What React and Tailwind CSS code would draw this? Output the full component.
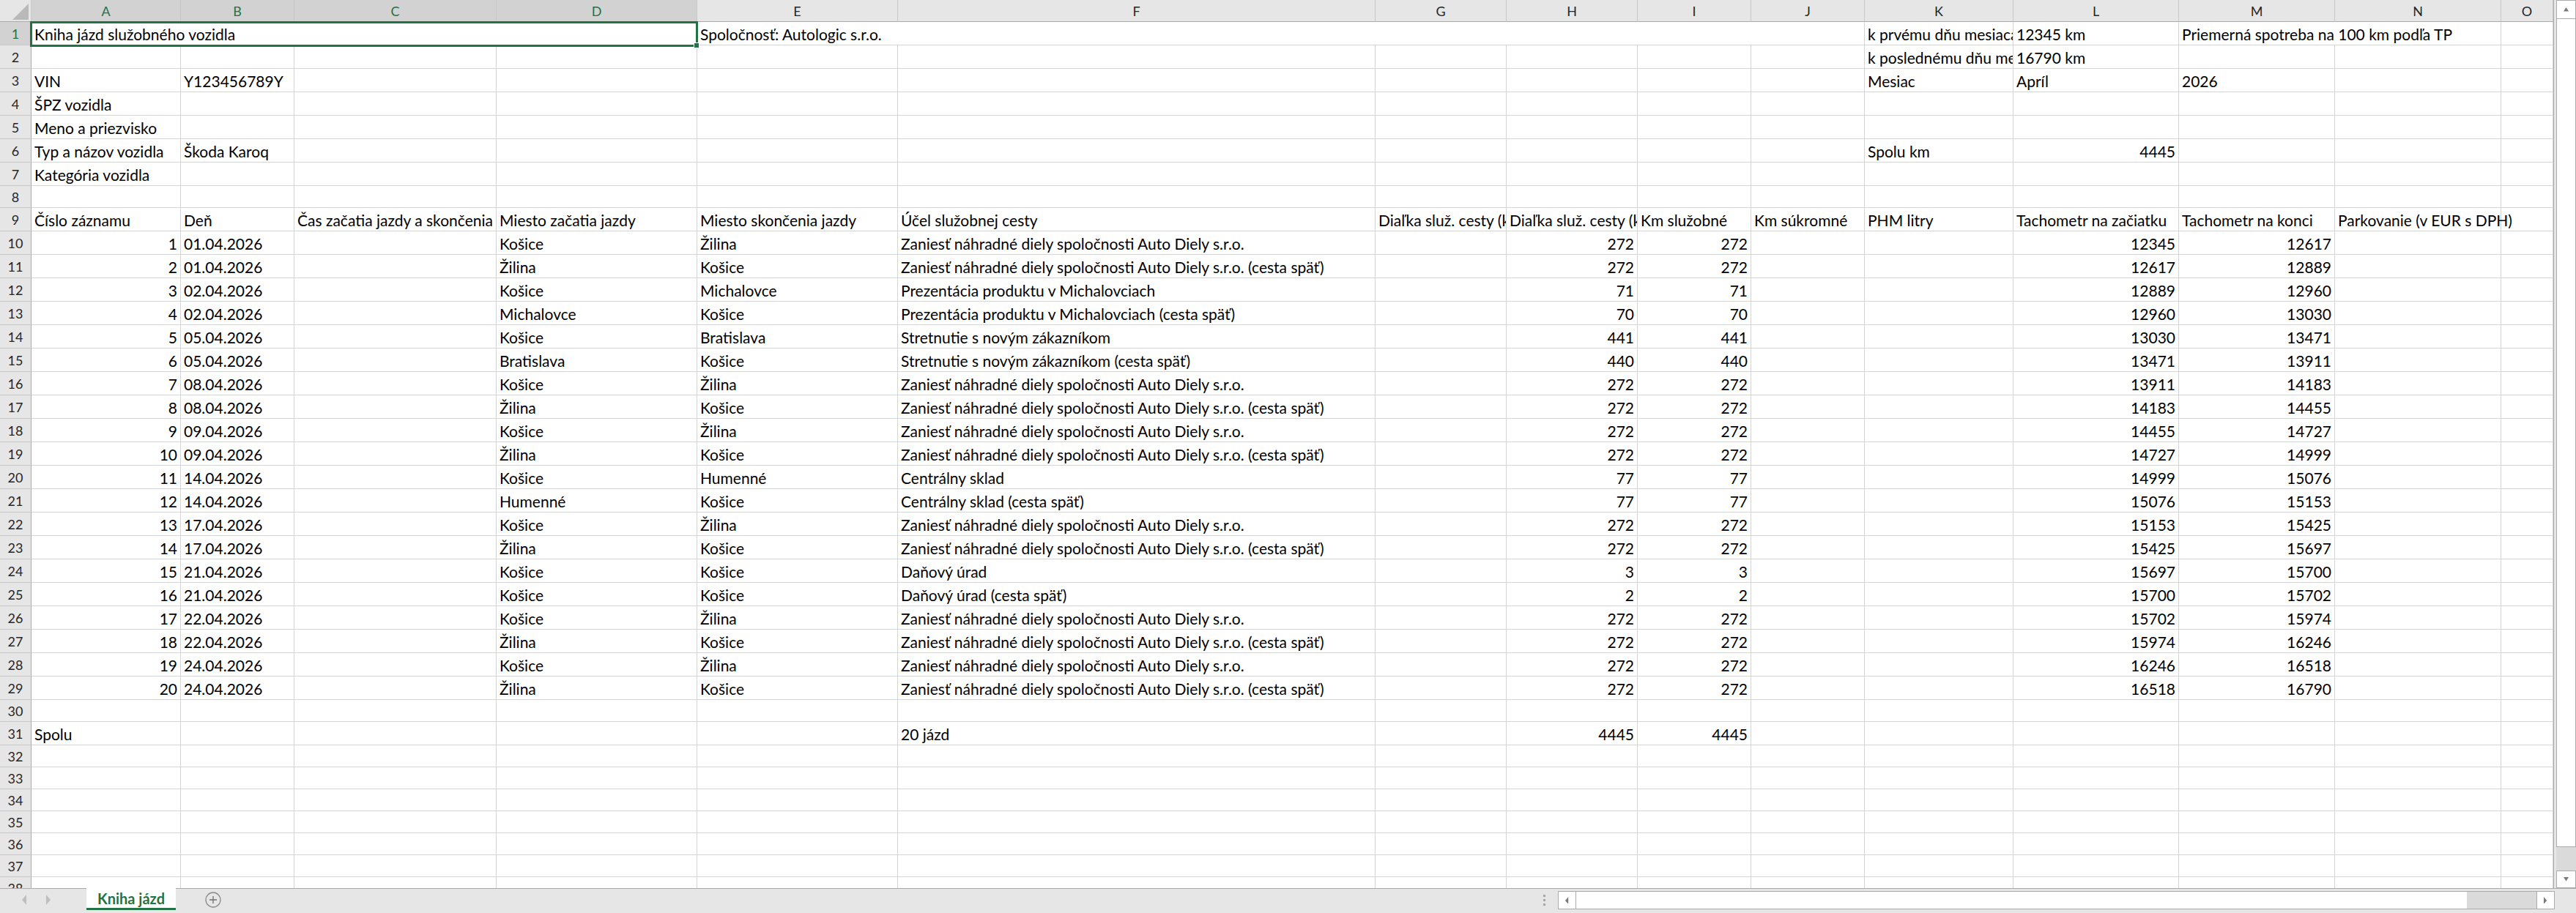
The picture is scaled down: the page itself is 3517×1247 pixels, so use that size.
// Kniha jázd – worksheet view

const COLS = [
  { key: 'A', w: 'w-[204px]' },
  { key: 'B', w: 'w-[155px]' },
  { key: 'C', w: 'w-[276px]' },
  { key: 'D', w: 'w-[274px]' },
  { key: 'E', w: 'w-[274px]' },
  { key: 'F', w: 'w-[652px]' },
  { key: 'G', w: 'w-[179px]' },
  { key: 'H', w: 'w-[179px]' },
  { key: 'I', w: 'w-[155px]' },
  { key: 'J', w: 'w-[155px]' },
  { key: 'K', w: 'w-[203px]' },
  { key: 'L', w: 'w-[226px]' },
  { key: 'M', w: 'w-[213px]' },
  { key: 'N', w: 'w-[227px]' },
  { key: 'O', w: 'w-[71px]' },
]

const SELECTED_COLS = ['A', 'B', 'C', 'D']

const DELIVERY = 'Zaniesť náhradné diely spoločnosti Auto Diely s.r.o.'
const BACK = ' (cesta späť)'

const trips = [
  ['01.04.2026', 'Košice', 'Žilina', DELIVERY, 272, 12345, 12617],
  ['01.04.2026', 'Žilina', 'Košice', DELIVERY + BACK, 272, 12617, 12889],
  ['02.04.2026', 'Košice', 'Michalovce', 'Prezentácia produktu v Michalovciach', 71, 12889, 12960],
  ['02.04.2026', 'Michalovce', 'Košice', 'Prezentácia produktu v Michalovciach' + BACK, 70, 12960, 13030],
  ['05.04.2026', 'Košice', 'Bratislava', 'Stretnutie s novým zákazníkom', 441, 13030, 13471],
  ['05.04.2026', 'Bratislava', 'Košice', 'Stretnutie s novým zákazníkom' + BACK, 440, 13471, 13911],
  ['08.04.2026', 'Košice', 'Žilina', DELIVERY, 272, 13911, 14183],
  ['08.04.2026', 'Žilina', 'Košice', DELIVERY + BACK, 272, 14183, 14455],
  ['09.04.2026', 'Košice', 'Žilina', DELIVERY, 272, 14455, 14727],
  ['09.04.2026', 'Žilina', 'Košice', DELIVERY + BACK, 272, 14727, 14999],
  ['14.04.2026', 'Košice', 'Humenné', 'Centrálny sklad', 77, 14999, 15076],
  ['14.04.2026', 'Humenné', 'Košice', 'Centrálny sklad' + BACK, 77, 15076, 15153],
  ['17.04.2026', 'Košice', 'Žilina', DELIVERY, 272, 15153, 15425],
  ['17.04.2026', 'Žilina', 'Košice', DELIVERY + BACK, 272, 15425, 15697],
  ['21.04.2026', 'Košice', 'Košice', 'Daňový úrad', 3, 15697, 15700],
  ['21.04.2026', 'Košice', 'Košice', 'Daňový úrad' + BACK, 2, 15700, 15702],
  ['22.04.2026', 'Košice', 'Žilina', DELIVERY, 272, 15702, 15974],
  ['22.04.2026', 'Žilina', 'Košice', DELIVERY + BACK, 272, 15974, 16246],
  ['24.04.2026', 'Košice', 'Žilina', DELIVERY, 272, 16246, 16518],
  ['24.04.2026', 'Žilina', 'Košice', DELIVERY + BACK, 272, 16518, 16790],
]

const data = {
  2: { K: 'k poslednému dňu mesiaca', L: '16790 km' },
  3: { A: 'VIN', B: 'Y123456789Y', K: 'Mesiac', L: 'Apríl', M: '2026' },
  4: { A: 'ŠPZ vozidla' },
  5: { A: 'Meno a priezvisko' },
  6: { A: 'Typ a názov vozidla', B: 'Škoda Karoq', K: 'Spolu km', L: 4445 },
  7: { A: 'Kategória vozidla' },
  9: {
    A: 'Číslo záznamu',
    B: 'Deň',
    C: 'Čas začatia jazdy a skončenia jazdy',
    D: 'Miesto začatia jazdy',
    E: 'Miesto skončenia jazdy',
    F: 'Účel služobnej cesty',
    G: 'Diaľka služ. cesty (km)',
    H: 'Diaľka služ. cesty (km)',
    I: 'Km služobné',
    J: 'Km súkromné',
    K: 'PHM litry',
    L: 'Tachometr na začiatku',
    M: 'Tachometr na konci',
    N: 'Parkovanie (v EUR s DPH)',
  },
  31: { A: 'Spolu', F: '20 jázd', H: 4445, I: 4445 },
}

trips.forEach(([day, from, to, purpose, km, start, end], i) => {
  data[10 + i] = { A: i + 1, B: day, D: from, E: to, F: purpose, H: km, I: km, L: start, M: end }
})

// row 1 holds merged ranges A:D, E:J and M:N
const firstRow = [
  { w: 'w-[909px]', t: 'Kniha jázd služobného vozidla' },
  { w: 'w-[1594px]', t: 'Spoločnosť: Autologic s.r.o.' },
  { w: 'w-[203px]', t: 'k prvému dňu mesiaca' },
  { w: 'w-[226px]', t: '12345 km' },
  { w: 'w-[440px]', t: 'Priemerná spotreba na 100 km podľa TP' },
  { w: 'w-[71px]', t: '' },
]

const rowHeight = (n) => (n === 8 || n === 30 || n >= 32 ? 'h-[30px]' : 'h-[32px]')

// text runs on into the next cell when that one is empty, otherwise it is clipped
const cellsFor = (n) => {
  if (n === 1) return firstRow
  const row = data[n] || {}
  return COLS.map(({ key, w }, i) => {
    const v = row[key]
    const next = COLS[i + 1] && row[COLS[i + 1].key]
    const spill = typeof v === 'string' && next == null && COLS[i + 1] != null
    return { w, t: v ?? '', right: typeof v === 'number', spill }
  })
}

const Cell = ({ w, t, right, spill }) => (
  <div
    className={`${w} shrink-0 border-r border-b border-[#d4d4d4] flex items-center pt-[2px] whitespace-nowrap ${
      spill ? 'overflow-visible relative z-10' : 'overflow-hidden'
    } ${right ? 'justify-end pr-[4px]' : 'pl-[4px]'}`}
  >
    {t}
  </div>
)

const SheetRow = ({ n }) => {
  const active = n === 1
  return (
    <div className={`flex ${rowHeight(n)}`}>
      <div
        className={`w-[43px] shrink-0 flex items-center justify-center pt-[3px] text-[18px] border-r border-b border-r-[#ababab] border-b-[#c8c8c8] ${
          active ? 'bg-[#d2d2d2] text-[#217346]' : 'bg-[#e6e6e6] text-[#262626]'
        }`}
      >
        {n}
      </div>
      {cellsFor(n).map((c, i) => (
        <Cell key={i} {...c} />
      ))}
    </div>
  )
}

const ColumnHeader = () => (
  <div className="flex h-[30px] text-[18px]">
    <div className="w-[43px] shrink-0 bg-[#e6e6e6] border-r border-b border-r-[#c8c8c8] border-b-[#ababab] flex items-end justify-end pr-[3px] pb-[2px]">
      <svg width="22" height="22" viewBox="0 0 22 22">
        <polygon points="0,22 22,22 22,0" fill="#b9b9b9" />
      </svg>
    </div>
    {COLS.map(({ key, w }) => {
      const sel = SELECTED_COLS.includes(key)
      return (
        <div
          key={key}
          className={`${w} shrink-0 border-r border-b border-r-[#c8c8c8] border-b-[#ababab] flex items-center justify-center pt-[3px] ${
            sel ? 'bg-[#d2d2d2] text-[#217346]' : 'bg-[#e6e6e6] text-[#262626]'
          }`}
        >
          {key}
        </div>
      )
    })}
  </div>
)

const Arrow = ({ dir, color = '#7a7a7a', size = 7 }) => {
  const pts = {
    up: '0,7 7,7 3.5,0',
    down: '0,0 7,0 3.5,7',
    left: '7,0 7,7 0,3.5',
    right: '0,0 0,7 7,3.5',
  }[dir]
  const w = dir === 'left' || dir === 'right' ? size * 0.6 : size
  const h = dir === 'left' || dir === 'right' ? size * 1.4 : size * 0.8
  return (
    <svg width={w} height={h} viewBox="0 0 7 7" preserveAspectRatio="none">
      <polygon points={pts} fill={color} />
    </svg>
  )
}

const VerticalScrollbar = () => (
  <div className="w-[31px] h-full shrink-0 bg-[#e6e6e6] border-l border-[#ababab] pl-[3px] flex flex-col">
    <div className="h-[26px] bg-white border border-[#ababab] flex items-center justify-center">
      <Arrow dir="up" />
    </div>
    <div className="h-[1131px] bg-white border-x border-b border-[#ababab]" />
    <div className="flex-1 bg-[#dadada]" />
    <div className="h-[24px] bg-white border border-[#ababab] flex items-center justify-center">
      <Arrow dir="down" />
    </div>
  </div>
)

const TabBar = () => (
  <div className="h-[34px] bg-[#e6e6e6] border-t border-[#ababab] flex items-start">
    <div className="w-[118px] h-[30px] flex items-center pl-[30px] gap-[27px]">
      <Arrow dir="left" color="#bfbfbf" size={10} />
      <Arrow dir="right" color="#bfbfbf" size={10} />
    </div>
    <div className="w-[122px] h-[30px] -mt-px bg-white border-b-[3px] border-[#217346] flex items-center justify-center font-bold text-[20px] text-[#217346]">
      Kniha jázd
    </div>
    <div className="ml-[40px] w-[22px] h-[30px] flex items-center justify-center">
      <svg width="22" height="22" viewBox="0 0 22 22">
        <circle cx="11" cy="11" r="10" fill="none" stroke="#8a8a8a" strokeWidth="1.3" />
        <path d="M11 6v10M6 11h10" stroke="#6f6f6f" strokeWidth="1.3" />
      </svg>
    </div>
    <div className="w-[1805px]" />
    <div className="w-[3px] h-[30px] flex flex-col justify-center gap-[3px]">
      <div className="h-[3px] bg-[#a6a6a6]" />
      <div className="h-[3px] bg-[#a6a6a6]" />
      <div className="h-[3px] bg-[#a6a6a6]" />
    </div>
    <div className="ml-[17px] mt-[3px] w-[1361px] h-[25px] flex">
      <div className="w-[25px] bg-white border border-[#ababab] flex items-center justify-center">
        <Arrow dir="left" />
      </div>
      <div className="w-[1216px] bg-white border-y border-[#ababab]" />
      <div className="flex-1 bg-[#dadada] border-y border-[#ababab]" />
      <div className="w-[25px] bg-white border border-[#ababab] flex items-center justify-center">
        <Arrow dir="right" />
      </div>
    </div>
  </div>
)

export default function App() {
  const rows = Array.from({ length: 38 }, (_, i) => i + 1)
  return (
    <div className="w-[3517px] h-[1247px] overflow-hidden bg-white text-black text-[21px] leading-[1.2] font-['Lato','Liberation_Sans',sans-serif] flex flex-col">
      <div className="h-[1213px] flex shrink-0">
        <div className="relative w-[3486px] h-full overflow-hidden">
          <ColumnHeader />
          {rows.map((n) => (
            <SheetRow key={n} n={n} />
          ))}
          {/* active selection A1:D1 */}
          <div className="absolute left-[41px] top-[29px] w-[912px] h-[35px] border-[3px] border-[#217346] pointer-events-none" />
          <div className="absolute left-[947px] top-[58px] w-[8px] h-[8px] bg-[#217346] border border-white" />
        </div>
        <VerticalScrollbar />
      </div>
      <TabBar />
    </div>
  )
}
